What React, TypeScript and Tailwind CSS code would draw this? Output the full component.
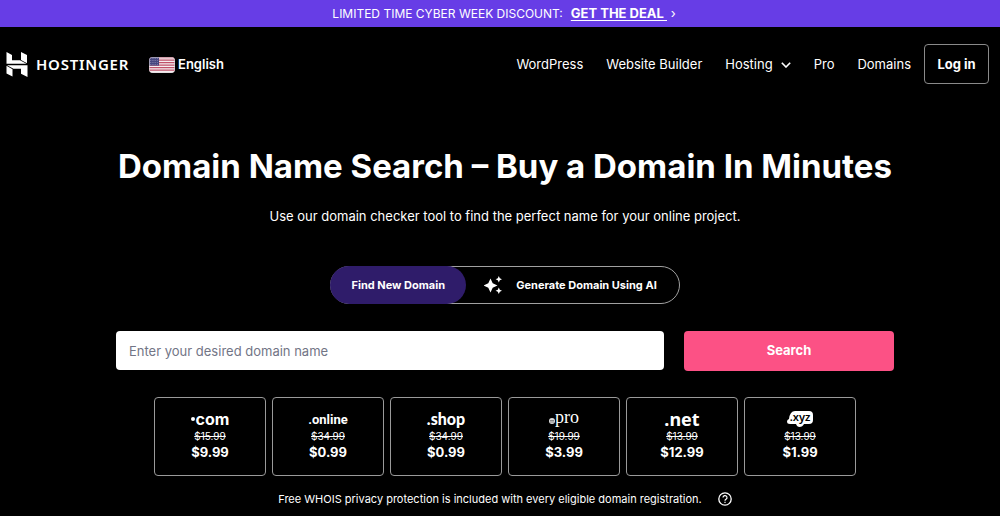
import { ReactNode } from 'react';

const navItems = ['WordPress', 'Website Builder', 'Hosting', 'Pro', 'Domains'];

const domains: { name: string; logo: ReactNode; oldPrice: string; price: string }[] = [
  { name: 'com', logo: <ComLogo />, oldPrice: '$15.99', price: '$9.99' },
  {
    name: 'online',
    logo: <span className="font-['Roboto',sans-serif] text-[13px] font-bold">.online</span>,
    oldPrice: '$34.99',
    price: '$0.99'
  },
  {
    name: 'shop',
    logo: <span className="font-['Lato',sans-serif] text-base font-black">.shop</span>,
    oldPrice: '$34.99',
    price: '$0.99'
  },
  { name: 'pro', logo: <ProLogo />, oldPrice: '$19.99', price: '$3.99' },
  {
    name: 'net',
    logo: <span className="font-['Noto_Sans',sans-serif] text-lg font-bold">.net</span>,
    oldPrice: '$13.99',
    price: '$12.99'
  },
  { name: 'xyz', logo: <XyzLogo />, oldPrice: '$13.99', price: '$1.99' }
];

function ComLogo() {
  return (
    <span className="flex items-center gap-px font-['Inter',sans-serif] text-base font-bold">
      <span className="size-1 rounded-full bg-white" />
      com
    </span>
  );
}

function ProLogo() {
  return (
    <span className="flex items-center pb-1 font-['Liberation_Serif',serif] text-lg font-normal">
      <svg viewBox="0 0 6 6" className="mt-2 size-1.5" aria-hidden="true">
        <circle cx="3" cy="3" r="3" fill="#ddd" />
        <path d="M1 2.500h4M1 4h4" stroke="#000" strokeWidth=".4" />
      </svg>
      pro
    </span>
  );
}

function XyzLogo() {
  return (
    <svg viewBox="0 0 28 18" className="h-[18px] w-7 overflow-visible" role="img" aria-label=".xyz">
      <path
        d="M9 1h14q4 0 4 4v5q0 4-4 4h-5q-1.500 3-4.500 3-2.500 0-3.500-3H4q-3 0-3-2.500 0-2 2-2.500Q4 1 9 1Z"
        fill="#fff"
      />
      <text
        x="14"
        y="11"
        textAnchor="middle"
        className="fill-black font-['Noto_Sans',sans-serif] text-[11px] font-semibold"
      >
        .xyz
      </text>
    </svg>
  );
}

function HostingerMark() {
  return (
    <svg viewBox="0 0 22 25" className="h-[25px] w-[22px]" fill="#fff" aria-hidden="true">
      <path d="M.5 0 6 3v5.200h8l6.500 3.600H.5Z" />
      <path d="M15 0l6 3v8.200l-6-3.200Z" />
      <path d="M1 13.200h20.500V25L15 21.800v-5H7.500Z" />
      <path d="M.5 13.800l6 3.400v7.300l-6-3Z" />
    </svg>
  );
}

function UsFlag() {
  return (
    <svg viewBox="0 0 26 16" className="h-4 w-[26px] rounded-sm" role="img" aria-label="United States">
      <rect width="26" height="16" fill="#f5eef0" />
      <path
        d="M0 .6h26M0 3.100h26M0 5.600h26M0 8.100h26M0 10.600h26M0 13.100h26"
        stroke="#c0526a"
        strokeWidth="1.250"
      />
      <rect width="10" height="8.600" fill="#46467f" />
      <path
        d="M1 1.500h8M1 3.500h8M1 5.500h8M1 7.500h8"
        stroke="#a9a9c8"
        strokeWidth=".7"
        strokeDasharray=".7 1.100"
      />
      <rect x=".5" y=".5" width="25" height="15" rx="1.500" fill="none" stroke="#d9d4d8" strokeWidth=".6" />
    </svg>
  );
}

function Sparkles() {
  return (
    <svg viewBox="0 0 18 18" className="size-[18px]" fill="#fff" aria-hidden="true">
      <path d="M6.500 2.500 8.700 7.300 13.500 9.500 8.700 11.700 6.500 16.500 4.300 11.700-.5 9.500 4.300 7.300Z" />
      <path d="M14.800 0l1 2.200 2.200 1-2.200 1-1 2.200-1-2.200-2.200-1 2.200-1Z" />
      <path d="M14.800 11.600l1 2.200 2.200 1-2.200 1-1 2.200-1-2.200-2.200-1 2.200-1Z" />
    </svg>
  );
}

const Banner = () => (
  <div className="flex h-[27px] items-center justify-center gap-2 bg-[#673de6] pl-2 text-[13px]">
    <span className="text-xs">LIMITED TIME CYBER WEEK DISCOUNT:</span>
    <span>
      <a href="#deal" className="font-bold whitespace-pre underline underline-offset-2">
        {'GET THE DEAL '}
      </a>
      {' ›'}
    </span>
  </div>
);

const Header = () => (
  <header className="flex items-center py-[17px] pr-[11px] pl-1.5">
    <a href="#home" className="flex items-center gap-2">
      <HostingerMark />
      <span className="font-['Noto_Sans',sans-serif] text-[15px] font-semibold tracking-wider">
        HOSTINGER
      </span>
    </a>
    <button
      type="button"
      className="ml-5 flex items-center gap-[3px] pt-px text-[13px] font-semibold"
    >
      <UsFlag />
      English
    </button>
    <nav className="ml-auto flex items-center gap-[23px] pt-px text-[13px]">
      {navItems.map((item) => (
        <a key={item} href={`#${item}`} className="flex items-center gap-2">
          {item}
          {item === 'Hosting' && (
            <svg viewBox="0 0 10 6" className="h-1.5 w-2.5" fill="none" aria-hidden="true">
              <path d="M.8.8 5 5 9.200.8" stroke="#fff" strokeWidth="1.600" />
            </svg>
          )}
        </a>
      ))}
    </nav>
    <a
      href="#login"
      className="ml-[13px] flex h-10 w-[65px] items-center justify-center rounded-sm border border-[#8a8a8a] pt-px text-[13px] font-bold"
    >
      Log in
    </a>
  </header>
);

const SearchTabs = () => (
  <div className="mt-10 flex h-[38px] rounded-full border border-[#a0a0a0] text-[11px] font-bold">
    <button type="button" className="-my-px -ml-px w-[136px] rounded-full bg-[#2f1c6a]">
      Find New Domain
    </button>
    <button type="button" className="flex items-center gap-3.5 pr-[22px] pl-[18px]">
      <Sparkles />
      Generate Domain Using AI
    </button>
  </div>
);

const SearchForm = () => (
  <form
    className="mt-[27px] flex w-full max-w-[778px] gap-5"
    onSubmit={(e) => e.preventDefault()}
  >
    <input
      type="text"
      aria-label="Domain name"
      placeholder="Enter your desired domain name"
      className="h-[39px] min-w-0 grow rounded-sm bg-white px-[13px] text-[13px] text-black placeholder:text-[#727586]"
    />
    <button type="submit" className="h-10 w-[210px] rounded-sm bg-[#fc5185] text-[13px] font-bold">
      Search
    </button>
  </form>
);

const DomainCards = () => (
  <ul className="mt-[26px] grid w-full max-w-[702px] grid-cols-6 gap-1.5">
    {domains.map(({ name, logo, oldPrice, price }) => (
      <li
        key={name}
        className="flex h-[79px] flex-col items-center rounded-sm border border-[#9a9a9a] pt-3"
      >
        <div className="flex h-[18px] items-center leading-none">{logo}</div>
        <s className="text-[10px] leading-4">{oldPrice}</s>
        <strong className="text-[13px] leading-4 font-bold">{price}</strong>
      </li>
    ))}
  </ul>
);

export default function App() {
  return (
    <div className="min-h-screen bg-black font-['Inter',sans-serif] text-white">
      <Banner />
      <Header />
      <main className="flex flex-col items-center pt-[45px] pl-[10px]">
        <h1 className="text-[33px] leading-10 font-bold">
          Domain Name Search – Buy a Domain In Minutes
        </h1>
        <p className="mt-5 text-[13px] leading-5">
          Use our domain checker tool to find the perfect name for your online project.
        </p>
        <SearchTabs />
        <SearchForm />
        <DomainCards />
        <p className="mt-[13px] flex items-center gap-4 text-[11px] leading-5">
          Free WHOIS privacy protection is included with every eligible domain registration.
          <svg viewBox="0 0 14 14" className="size-3.5" fill="none" stroke="#fff" aria-hidden="true">
            <circle cx="7" cy="7" r="6.200" strokeWidth="1.300" />
            <path d="M5 5.600a2 2 0 1 1 3 1.700q-1 .6-1 1.400M7 9.800v1.200" strokeWidth="1.200" />
          </svg>
        </p>
      </main>
    </div>
  );
}
